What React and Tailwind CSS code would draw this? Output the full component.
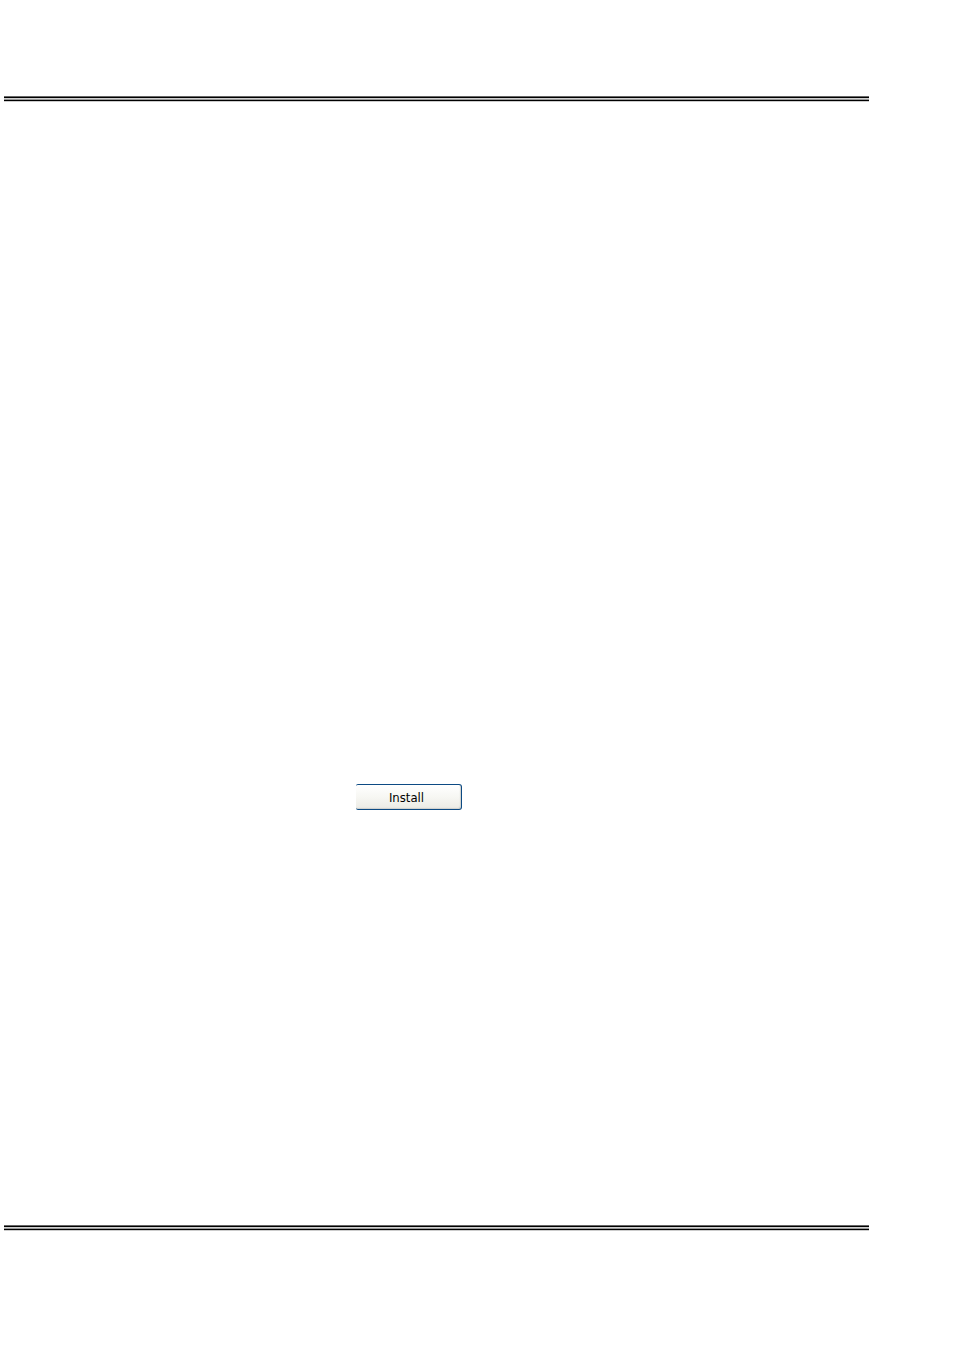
function DoubleRule() {
  return (
    <div role="separator" className="ml-1 mr-[85px] flex flex-col">
      <div className="h-px bg-[#666666]" />
      <div className="h-px bg-black" />
      <div className="h-px bg-[#d0d0d0]" />
      <div className="h-px bg-[#999999]" />
      <div className="h-px bg-black" />
      <div className="h-px bg-[#cccccc]" />
    </div>
  );
}

export default function App() {
  return (
    <div className="flex min-h-screen flex-col bg-white pt-24 pb-[119px]">
      <DoubleRule />
      <main className="flex grow flex-col items-start pt-[682px] pl-[356px]">
        <button
          type="button"
          className="flex h-[26px] w-[106px] items-center justify-center rounded-r-[3px] rounded-l-[2px] border border-l-0 border-[#0c4a83] bg-linear-to-b from-white via-[#f7f7f3] to-[#ecebe5] pt-px pr-1 font-['DejaVu_Sans_Condensed','DejaVu_Sans',sans-serif] text-[13px] leading-4 text-black shadow-[inset_-1px_-1px_1px_#cfd0cc]"
        >
          Install
        </button>
      </main>
      <DoubleRule />
    </div>
  );
}
